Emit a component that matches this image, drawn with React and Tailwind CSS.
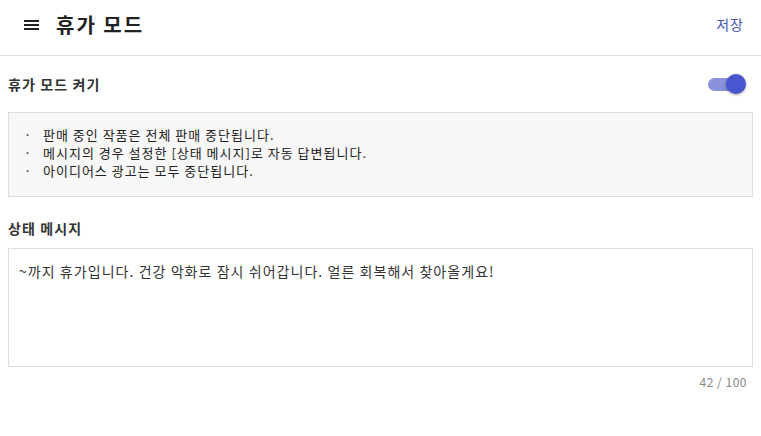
import React from "react";

export default function App() {
  const font = { fontFamily: '"Noto Sans CJK KR", "Noto Sans", sans-serif' };
  const items = [
    "판매 중인 작품은 전체 판매 중단됩니다.",
    "메시지의 경우 설정한 [상태 메시지]로 자동 답변됩니다.",
    "아이디어스 광고는 모두 중단됩니다.",
  ];
  return (
    <div className="w-[761px] h-[436px] bg-white text-[#333]" style={font}>
      <header className="h-[56px] flex items-center justify-between border-b border-[#e0e0e0] pl-[24px] pr-[17px] pb-[6px]">
        <div className="flex items-center">
          <svg width="15" height="10" viewBox="0 0 15 10" className="mr-[17px]">
            <rect x="0" y="0" width="15" height="2" fill="#222" />
            <rect x="0" y="4" width="15" height="2" fill="#222" />
            <rect x="0" y="8" width="15" height="2" fill="#222" />
          </svg>
          <span className="text-[20px] font-bold text-[#222] tracking-[2px]">휴가 모드</span>
        </div>
        <span className="text-[14px] text-[#4555b8] tracking-[1px]">저장</span>
      </header>
      <div className="px-[8px]">
        <div className="flex items-center justify-between h-[56px]">
          <span className="text-[14px] font-bold text-[#333] tracking-[1.1px]">휴가 모드 켜기</span>
          <div className="relative w-[38px] h-[20px] mr-[7px] flex items-center">
            <div className="w-[32px] h-[13px] rounded-full bg-[#8990dc]" />
            <div className="absolute right-[0px] top-0 w-[20px] h-[20px] rounded-full bg-[#4a56cf] shadow-[0_1px_3px_rgba(0,0,0,0.35)]" />
          </div>
        </div>
        <div className="bg-[#f7f7f7] border border-[#dddddd] h-[85px] pt-[13px] pl-[15px] text-[13px] text-[#222] leading-[18px] tracking-[1px]">
          {items.map((t) => (
            <div key={t} className="flex">
              <span className="w-[19px] shrink-0">·</span>
              <span>{t}</span>
            </div>
          ))}
        </div>
        <div className="mt-[21px] text-[14px] font-bold text-[#333] h-[30px] tracking-[1.1px]">상태 메시지</div>
        <div className="border border-[#dddddd] h-[119px] pt-[12px] pl-[10px] text-[14px] text-[#333] tracking-[1.05px]">
          ~까지 휴가입니다. 건강 악화로 잠시 쉬어갑니다. 얼른 회복해서 찾아올게요!
        </div>
        <div className="text-right text-[12px] text-[#888] mt-[6px] pr-[6px] tracking-[0.5px]">42 / 100</div>
      </div>
    </div>
  );
}
